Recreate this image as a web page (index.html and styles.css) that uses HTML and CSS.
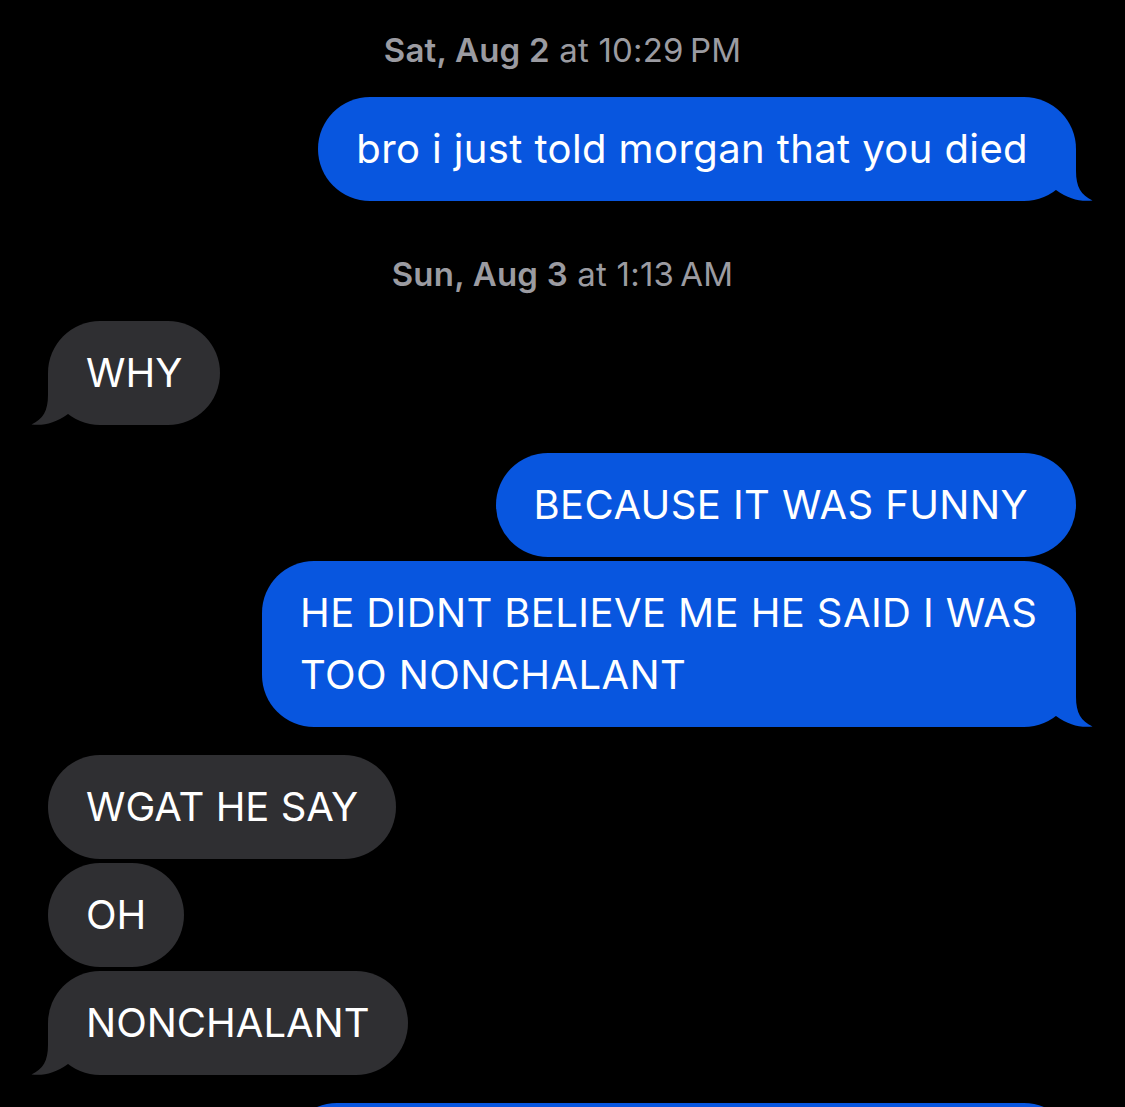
FILE: index.html
```html
<!DOCTYPE html>
<html lang="en">
<head>
<meta charset="utf-8">
<title>Messages</title>
<link rel="stylesheet" href="styles.css">
</head>
<body>
<main class="thread">
  <div class="stamp first"><b>Sat, Aug 2</b> at 10:29&#8201;PM</div>
  <div class="row sent">
    <div class="bubble blue tail">bro i just told morgan that you died
      <svg class="tail-svg" viewBox="0 0 40 52" width="40" height="52" aria-hidden="true"><path d="M23 0 L23 22 C23 38 28 46 39.5 51.5 C27 53 16 50 3 41 L-20 41 L-20 0 Z"/></svg>
    </div>
  </div>

  <div class="stamp"><b>Sun, Aug 3</b> at 1:13&#8201;AM</div>
  <div class="row recv">
    <div class="bubble gray tail">WHY
      <svg class="tail-svg" viewBox="0 0 40 52" width="40" height="52" aria-hidden="true"><path d="M23 0 L23 22 C23 38 28 46 39.5 51.5 C27 53 16 50 3 41 L-20 41 L-20 0 Z"/></svg>
    </div>
  </div>

  <div class="group">
    <div class="row sent">
      <div class="bubble blue">BECAUSE IT WAS FUNNY</div>
    </div>
    <div class="row sent">
      <div class="bubble blue tail wide">HE DIDNT BELIEVE ME HE SAID I WAS TOO NONCHALANT
        <svg class="tail-svg" viewBox="0 0 40 52" width="40" height="52" aria-hidden="true"><path d="M23 0 L23 22 C23 38 28 46 39.5 51.5 C27 53 16 50 3 41 L-20 41 L-20 0 Z"/></svg>
      </div>
    </div>
  </div>

  <div class="group">
    <div class="row recv">
      <div class="bubble gray">WGAT HE SAY</div>
    </div>
    <div class="row recv">
      <div class="bubble gray">OH</div>
    </div>
    <div class="row recv">
      <div class="bubble gray tail">NONCHALANT
        <svg class="tail-svg" viewBox="0 0 40 52" width="40" height="52" aria-hidden="true"><path d="M23 0 L23 22 C23 38 28 46 39.5 51.5 C27 53 16 50 3 41 L-20 41 L-20 0 Z"/></svg>
      </div>
    </div>
  </div>

  <div class="group">
    <div class="row sent">
      <div class="bubble blue cut" aria-hidden="true">&nbsp;</div>
    </div>
  </div>
</main>
</body>
</html>
```

FILE: styles.css
```css
html, body {
  margin: 0;
  padding: 0;
  background: #000;
}

body {
  width: 1125px;
  height: 1107px;
  overflow: hidden;
  font-family: Inter, "Liberation Sans", sans-serif;
  -webkit-font-smoothing: antialiased;
}

.thread {
  display: flex;
  flex-direction: column;
  padding: 0 49px 0 48px;
}

.stamp {
  text-align: center;
  color: #9b9ba1;
  font-size: 33px;
  letter-spacing: 0.2px;
  line-height: 40px;
  margin: 53px 0 27px;
  padding-left: 1px;
}

.stamp b {
  font-weight: 600;
}

.stamp.first {
  margin-top: 30px;
}

.group {
  display: flex;
  flex-direction: column;
  gap: 4px;
  margin-top: 28px;
}

.row {
  display: flex;
}

.row.sent {
  justify-content: flex-end;
}

.row.recv {
  justify-content: flex-start;
}

.bubble {
  position: relative;
  z-index: 0;
  font-size: 40px;
  letter-spacing: 0.4px;
  line-height: 62px;
  padding: 21px 38px;
  border-radius: 52px;
  color: #fff;
}

.bubble.blue {
  background: #0856df;
  fill: #0856df;
  padding-right: 48px;
}

.bubble.gray {
  background: #2f2f32;
  fill: #2f2f32;
  letter-spacing: 0;
}

.tail-svg {
  position: absolute;
  z-index: -1;
  bottom: 0;
  overflow: visible;
}

.sent .tail-svg {
  right: -17px;
}

.recv .tail-svg {
  left: -17px;
  transform: scaleX(-1);
}

.bubble.wide {
  padding-right: 38px;
  max-width: 738px;
}

.bubble.cut {
  width: 705px;
  height: 124px;
}
```
